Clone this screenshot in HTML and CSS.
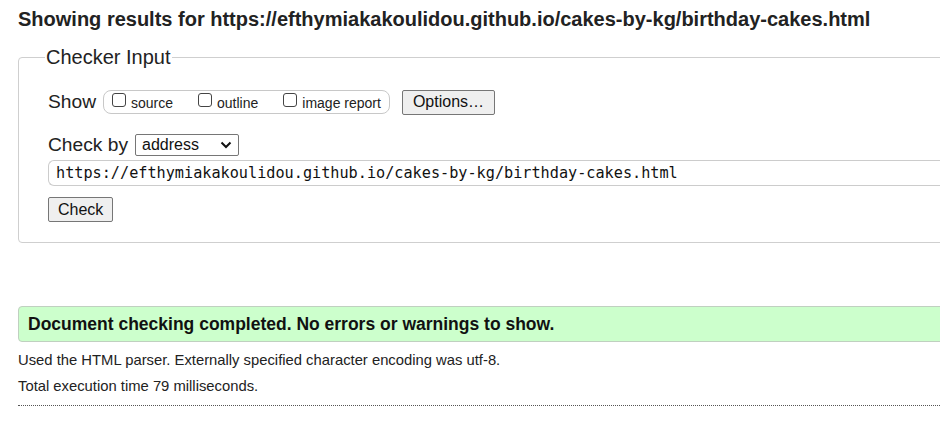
FILE: index.html
```html
<!DOCTYPE html>
<html lang="en">
<head>
<meta charset="utf-8">
<title>Nu Html Checker</title>
<link rel="stylesheet" href="styles.css">
</head>
<body>
<div class="page">
  <h2 class="results-title">Showing results for https://efthymiakakoulidou.github.io/cakes-by-kg/birthday-cakes.html</h2>
  <fieldset class="checker">
    <legend class="checker-legend">Checker Input</legend>
    <div class="row show-row">
      <span class="row-label">Show</span>
      <div class="show-group">
        <label class="opt"><span class="box"></span>source</label>
        <label class="opt"><span class="box"></span>outline</label>
        <label class="opt"><span class="box"></span>image report</label>
      </div>
      <button class="btn options-btn" type="button">Options…</button>
    </div>
    <div class="row checkby-row">
      <span class="row-label">Check by</span>
      <div class="select">
        <span class="select-text">address</span>
        <svg class="chev" width="12" height="8" viewBox="0 0 12 8"><path d="M1.5 1.5 L6 6 L10.5 1.5" fill="none" stroke="#111" stroke-width="2"/></svg>
      </div>
    </div>
    <div class="url-input">https://efthymiakakoulidou.github.io/cakes-by-kg/birthday-cakes.html</div>
    <div class="row">
      <button class="btn check-btn" type="button">Check</button>
    </div>
  </fieldset>
  <p class="success">Document checking completed. No errors or warnings to show.</p>
  <p class="info">Used the HTML parser. Externally specified character encoding was utf-8.</p>
  <p class="info info-last">Total execution time 79 milliseconds.</p>
  <hr class="dotted">
</div>
</body>
</html>
```

FILE: styles.css
```css
html, body {
  margin: 0;
  padding: 0;
  background: #fff;
  overflow: hidden;
}
body {
  font-family: "Liberation Sans", Arial, sans-serif;
  color: #1d1d1d;
  width: 940px;
}
.page {
  padding: 0 0 0 18px;
  width: 1100px;
  display: flex;
  flex-direction: column;
}
.results-title {
  margin: 7px 0 0 0;
  font-size: 20px;
  line-height: 24px;
  font-weight: bold;
  color: #222;
}
.checker {
  margin: 15px 0 0 0;
  padding: 8px 29px 20px 29px;
  border: 1px solid #cfcfcf;
  border-radius: 4px;
  width: 1000px;
  display: flex;
  flex-direction: column;
  box-sizing: border-box;
}
.checker-legend {
  font-size: 20px;
  line-height: 22px;
  padding: 0 1px;
  margin-left: -3px;
  color: #222;
}
.row {
  display: flex;
  align-items: center;
}
.show-row {
  margin-top: 13px;
  height: 26px;
}
.row-label {
  font-size: 19.2px;
  color: #222;
}
.show-group {
  margin-left: 7px;
  border: 1px solid #c8c8c8;
  border-radius: 8px;
  height: 22px;
  padding: 0 8px 0 8px;
  display: flex;
  align-items: center;
  gap: 25px;
}
.opt {
  font-size: 14px;
  display: flex;
  align-items: center;
  color: #222;
  position: relative;
  top: 1px;
}
.box {
  width: 12px;
  height: 12px;
  border: 1px solid #444;
  border-radius: 3px;
  margin-right: 5px;
  position: relative;
  top: -3px;
}
.btn {
  font-family: "Liberation Sans", Arial, sans-serif;
  font-size: 16px;
  background: #efefef;
  border: 1px solid #767676;
  border-radius: 2px;
  color: #111;
  padding: 0 10px;
  height: 25px;
}
.options-btn {
  margin-left: 12px;
}
.checkby-row {
  margin-top: 19px;
}
.select {
  margin-left: 7px;
  width: 104px;
  height: 22px;
  box-sizing: border-box;
  border: 1px solid #767676;
  border-radius: 2px;
  display: flex;
  align-items: center;
  justify-content: space-between;
  padding: 0 6px 0 6px;
  font-size: 16px;
  color: #111;
}
.url-input {
  margin-top: 4px;
  height: 26px;
  box-sizing: border-box;
  border: 1px solid #cccccc;
  border-right: none;
  border-radius: 6px 0 0 6px;
  margin-right: -40px;
  padding: 0 0 0 7px;
  display: flex;
  align-items: center;
  font-family: "DejaVu Sans Mono", "Liberation Mono", monospace;
  font-size: 15.2px;
  color: #111;
}
.check-btn {
  margin-top: 11px;
  padding: 0 9px;
}
.success {
  margin: 63px 0 0 0;
  width: 1000px;
  height: 36px;
  box-sizing: border-box;
  background: #ccffcc;
  border: 1px solid #c0d0c0;
  border-radius: 4px;
  padding: 0 0 0 9px;
  display: flex;
  align-items: center;
  font-weight: bold;
  font-size: 17.5px;
  color: #111;
}
.info {
  margin: 10px 0 0 0;
  font-size: 14.8px;
  line-height: 17px;
  color: #222;
}
.info-last {
  margin-top: 9px;
}
.dotted {
  margin: 10px 0 0 0;
  width: 1000px;
  border: none;
  border-top: 1px dotted #555;
  height: 0;
}
```
